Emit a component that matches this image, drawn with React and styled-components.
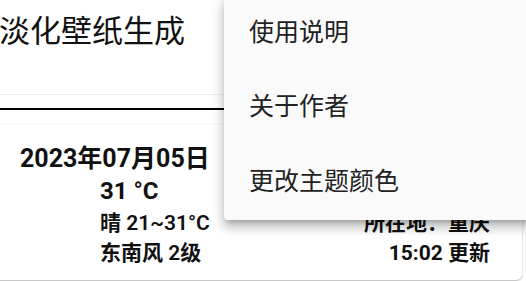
import styled, { createGlobalStyle } from "styled-components";

const GlobalStyle = createGlobalStyle`
  html, body {
    margin: 0;
    padding: 0;
    background: #fff;
    overflow: hidden;
  }
  body {
    font-family: Roboto, "Noto Sans CJK SC", sans-serif;
    color: #111;
  }
`;

// the page is scrolled a little to the left, so everything starts off-screen
const Page = styled.div`
  position: relative;
  width: 534px;
  height: 281px;
  margin-left: -8px;
  overflow: hidden;
`;

const AppBar = styled.header`
  height: 94px;
  border-bottom: 1px solid #efefef;
  padding-left: 7px;
`;

const Title = styled.h1`
  margin: 0;
  font-size: 31px;
  font-weight: 400;
  line-height: 64px;
  color: #111;
`;

const Divider = styled.div`
  display: flex;
  align-items: center;
  height: 28px;
  gap: 3px;
  &::before,
  &::after {
    content: "";
    flex: 1;
    height: 2px;
    background: #000;
  }
`;

const DividerLabel = styled.span`
  font-size: 20px;
  line-height: 28px;
  color: #111;
`;

const Card = styled.section`
  margin: 2px 4px 0 0;
  padding: 17px 32px 12px 28px;
  background: #fff;
  border-radius: 6px;
  box-shadow: 0 1px 3px rgba(0, 0, 0, 0.22), 0 1px 1px rgba(0, 0, 0, 0.1);
`;

const DateLine = styled.div`
  font-size: 25px;
  font-weight: 700;
  line-height: 33px;
`;

const Temp = styled.div`
  padding-left: 80px;
  font-size: 24px;
  font-weight: 700;
  line-height: 33px;
`;

const Row = styled.div`
  display: flex;
  justify-content: space-between;
  padding-left: 80px;
  line-height: 30px;
  font-size: 21px;
  &:first-of-type {
    padding-top: 2px;
  }
`;

const Cell = styled.span`
  font-weight: ${(p) => (p.$bold ? 700 : 600)};
`;

const Menu = styled.ul`
  position: absolute;
  top: -4px;
  left: 232px;
  right: -6px;
  margin: 0;
  padding: 0;
  list-style: none;
  background: #fafafa;
  border-radius: 4px;
  box-shadow: 0 5px 5px -3px rgba(0, 0, 0, 0.2),
    0 8px 10px 1px rgba(0, 0, 0, 0.14), 0 3px 14px 2px rgba(0, 0, 0, 0.12);
`;

const MenuItem = styled.li`
  box-sizing: border-box;
  height: 74.5px;
  display: flex;
  align-items: center;
  padding: 0 0 7px 25px;
  font-size: 25px;
  color: #222;
`;

const menu = ["使用说明", "关于作者", "更改主题颜色"];

export default function App() {
  return (
    <>
      <GlobalStyle />
      <Page>
        <AppBar>
          <Title>淡化壁纸生成</Title>
        </AppBar>
        <Divider>
          <DividerLabel>天气</DividerLabel>
        </Divider>
        <Card>
          <DateLine>2023年07月05日</DateLine>
          <Temp>31 °C</Temp>
          <Row>
            <Cell>晴 21~31°C</Cell>
            <Cell>所在地：重庆</Cell>
          </Row>
          <Row>
            <Cell>东南风 2级</Cell>
            <Cell $bold>15:02 更新</Cell>
          </Row>
        </Card>
        <Menu>
          {menu.map((m) => (
            <MenuItem key={m}>{m}</MenuItem>
          ))}
        </Menu>
      </Page>
    </>
  );
}
